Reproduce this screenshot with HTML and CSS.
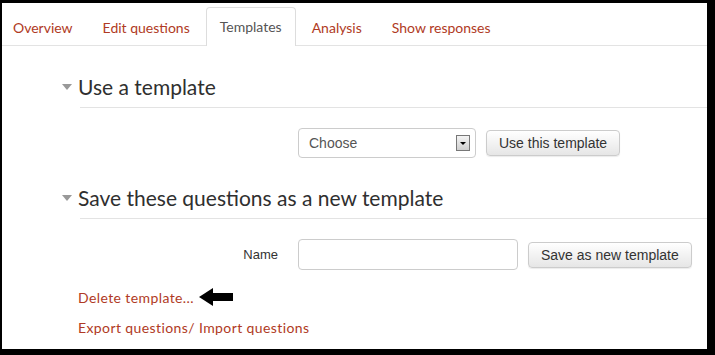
FILE: index.html
```html
<!DOCTYPE html>
<html lang="en">
<head>
    <meta charset="UTF-8">
    <title>Templates</title>
    <link rel="stylesheet" href="styles.css">
</head>
<body>
    <div class="page">
        <nav class="tabs">
            <a href="#">Overview</a>
            <a href="#">Edit questions</a>
            <a href="#" class="active">Templates</a>
            <a href="#">Analysis</a>
            <a href="#">Show responses</a>
        </nav>

        <div class="content">
            <section class="block">
                <h2><span class="caret"></span>Use a template</h2>
                <div class="row">
                    <label></label>
                    <div class="select">
                        <span>Choose</span>
                        <span class="select-arrow"></span>
                    </div>
                    <button>Use this template</button>
                </div>
            </section>

            <section class="block">
                <h2><span class="caret"></span>Save these questions as a new template</h2>
                <div class="row">
                    <label>Name</label>
                    <input type="text" class="name-input">
                    <button>Save as new template</button>
                </div>
            </section>

            <div class="links">
                <div class="link-line">
                    <a href="#">Delete template...</a>
                    <span class="pointer"></span>
                </div>
                <div class="link-line">
                    <a href="#">Export questions/ </a><a href="#">Import questions</a>
                </div>
            </div>
        </div>
    </div>
</body>
</html>
```

FILE: styles.css
```css
:root {
    --link-color: #b03a24;
    --heading-color: #2f2f2f;
    --line-color: #e3e3e3;
}

html, body {
    margin: 0;
    background-color: #000;
}

body {
    padding: 3px 8px 6px 2px;
    font-family: 'Lato', 'Liberation Sans', sans-serif;
}

.page {
    background-color: #fff;
    height: 346px;
    overflow: hidden;
}

.tabs {
    display: flex;
    align-items: flex-end;
    height: 42px;
    border-bottom: 1px solid var(--line-color);
    margin-left: -3px;
}

.tabs a {
    display: block;
    padding: 0 13px;
    margin-right: 2px;
    line-height: 37px;
    font-size: 14px;
    color: var(--link-color);
    text-decoration: none;
    border: 1px solid transparent;
    border-bottom: none;
    border-radius: 4px 4px 0 0;
    margin-bottom: -1px;
    height: 38px;
    box-sizing: border-box;
}

.tabs a.active {
    color: #555;
    background-color: #fff;
    border-color: #ddd;
    height: 39px;
}

.content {
    padding-left: 58px;
}

.block h2 {
    display: flex;
    align-items: center;
    margin: 0;
    font-size: 21px;
    font-weight: normal;
    color: var(--heading-color);
    position: relative;
}

.block h2::after {
    content: "";
    position: absolute;
    left: 20px;
    right: 0;
    bottom: 0;
    border-bottom: 1px solid var(--line-color);
}

.block:first-child h2 {
    padding: 28px 0 9px 0;
}

.block + .block h2 {
    padding: 27px 0 9px 0;
}

.caret {
    width: 0;
    height: 0;
    border-left: 5px solid transparent;
    border-right: 5px solid transparent;
    border-top: 6px solid #999;
    margin: 0 6px 0 2px;
}

.row {
    display: flex;
    align-items: center;
    padding: 20px 0 0 0;
}

.row label {
    width: 200px;
    margin-left: 18px;
    margin-right: 20px;
    text-align: right;
    font-family: 'Liberation Sans', Arial, sans-serif;
    font-size: 13px;
    color: #333;
}

.select {
    display: flex;
    align-items: center;
    justify-content: space-between;
    width: 178px;
    height: 30px;
    box-sizing: border-box;
    border: 1px solid #ccc;
    border-radius: 4px;
    padding: 0 5px 0 10px;
    font-family: 'Liberation Sans', Arial, sans-serif;
    font-size: 14px;
    color: #555;
}

.select-arrow {
    width: 14px;
    height: 16px;
    box-sizing: border-box;
    border: 1px solid #777;
    background: linear-gradient(#f4f4f4, #cfcfcf);
    position: relative;
}

.select-arrow::after {
    content: "";
    position: absolute;
    left: 3px;
    top: 6px;
    border-left: 3px solid transparent;
    border-right: 3px solid transparent;
    border-top: 3px solid #000;
}

.name-input {
    width: 220px;
    height: 31px;
    box-sizing: border-box;
    border: 1px solid #ccc;
    border-radius: 4px;
    margin: 0;
}

button {
    margin-left: 10px;
    height: 26px;
    padding: 0 12px;
    font-family: 'Liberation Sans', Arial, sans-serif;
    font-size: 14px;
    color: #333;
    background: linear-gradient(#fff, #e6e6e6);
    border: 1px solid #ccc;
    border-radius: 4px;
    box-shadow: 0 1px 1px rgba(0, 0, 0, 0.08);
}

.links {
    padding: 12px 0 0 18px;
}

.link-line {
    display: flex;
    align-items: center;
    height: 30px;
    font-size: 14px;
    letter-spacing: 0.4px;
}

.link-line a {
    color: var(--link-color);
    text-decoration: none;
    white-space: pre;
}

.pointer {
    position: relative;
    width: 34px;
    height: 18px;
    margin-left: 5px;
}

.pointer::before {
    content: "";
    position: absolute;
    left: 0;
    top: 0;
    border-top: 9px solid transparent;
    border-bottom: 9px solid transparent;
    border-right: 14px solid #000;
}

.pointer::after {
    content: "";
    position: absolute;
    left: 13px;
    top: 5px;
    width: 21px;
    height: 8px;
    background-color: #000;
}
```
